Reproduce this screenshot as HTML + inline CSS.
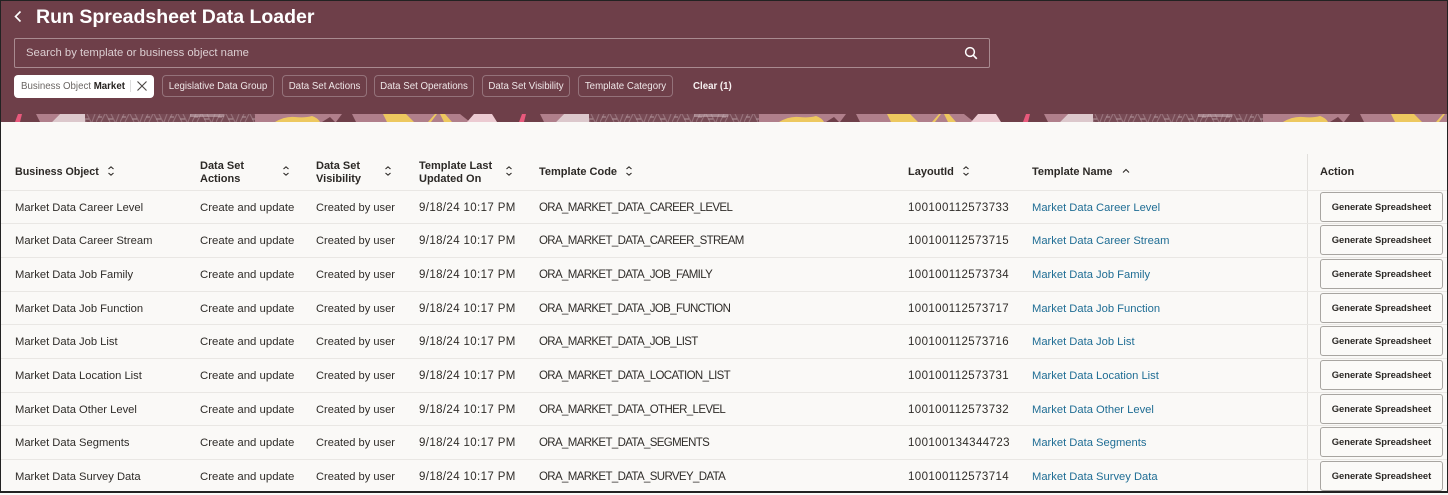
<!DOCTYPE html>
<html>
<head>
<meta charset="utf-8">
<title>Run Spreadsheet Data Loader</title>
<style>
html,body{margin:0;padding:0;background:#faf9f7;}
body{position:relative;width:1448px;height:493px;overflow:hidden;font-family:"Liberation Sans",sans-serif;color:#2c2926;}
.frame{position:absolute;left:0;top:0;width:1446px;height:490px;border:1px solid #222;border-bottom-width:2px;z-index:10;pointer-events:none;}
.hero{position:absolute;left:0;top:0;width:1448px;height:122px;background:#6e3f49;}
.band{position:absolute;left:0;top:114px;}
h1{position:absolute;left:36px;top:5px;margin:0;font-size:19.5px;line-height:24px;font-weight:bold;color:#fff;white-space:nowrap;}
.search{position:absolute;left:14px;top:38px;width:974px;height:28px;border:1px solid #a98a90;border-radius:2px;}
.search span{position:absolute;left:11px;top:6px;font-size:11.3px;line-height:16px;color:#dccfd2;white-space:nowrap;}
.chip{position:absolute;top:75px;height:22px;box-sizing:border-box;border:1px solid #94727a;border-radius:4px;font-size:9.7px;line-height:21px;color:#efe7e8;text-align:center;white-space:nowrap;}
.on{left:14px;width:140px;height:23px;top:75px;background:#fff;border:0;border-radius:4px;color:#6b6663;}
.on span{position:absolute;left:7px;top:4px;line-height:16px;}
.on b{color:#26221f;}
.clear{position:absolute;left:693px;top:79px;font-size:9.7px;line-height:15px;font-weight:bold;color:#f7f1f1;white-space:nowrap;}
.th{position:absolute;font-size:11px;line-height:13px;font-weight:bold;color:#2c2926;white-space:nowrap;}
.sort{position:absolute;}
.line{position:absolute;left:0;width:1447px;height:1px;background:#e9e7e4;}
.vline{position:absolute;left:1307px;top:154px;width:1px;height:337px;background:#e2e0dd;}
.row{position:absolute;left:0;width:1448px;height:33px;font-size:11.2px;line-height:35px;color:#2f2c29;}
.row span{position:absolute;top:0;white-space:nowrap;}
.a{left:15px}.b{left:200px;font-size:11.4px}.c{left:316px;font-size:11.1px}.d{left:419px;font-size:11.5px;letter-spacing:.37px}.e{left:539px;font-size:11.5px;letter-spacing:-.64px}.f{left:908px;font-size:11.5px;letter-spacing:.4px}
.row .g{left:1032px;color:#1f6d94;}
.row .h{left:1320px;top:1px;width:123px;height:30px;box-sizing:border-box;border:1px solid #a8a5a1;border-radius:3px;background:#fbfaf8;font-size:9.4px;line-height:28px;font-weight:bold;text-align:center;color:#2c2926;}
</style>
</head>
<body>
<div class="hero">
<svg class="band" width="1448" height="8" viewBox="0 0 1448 8" xmlns="http://www.w3.org/2000/svg">
<defs>
<pattern id="noise" width="24" height="8" patternUnits="userSpaceOnUse">
<rect width="24" height="8" fill="#774b55"/>
<path d="M0 8L4 0M5 8L9 0M10 0L14 8M15 0L19 8M20 8L23 0" stroke="#97717a" stroke-width="1.1"/>
<path d="M2 3h4M12 5h5" stroke="#b1959b" stroke-width="1"/>
</pattern>
<g id="tile">
<rect x="0" y="0" width="504" height="8" fill="#6e3f49"/>
<path d="M15 8L18 0H22L20 8Z" fill="#e8597c"/>
<path d="M36 0H60L52 8H40Z" fill="#b07f8b"/>
<path d="M52 8L60 0H85V8Z" fill="#dcc8cc"/>
<rect x="85" y="0" width="170" height="8" fill="url(#noise)"/>
<rect x="190" y="0" width="34" height="3" fill="#cdb6bb" opacity=".55"/>
<rect x="255" y="0" width="87" height="8" fill="#b07f8b"/>
<path d="M275 8Q285 2 295 3T312 2Q318 4 320 8Z" fill="#edc85f"/>
<path d="M322 8L330 3L335 8Z" fill="#6e3f49"/>
<path d="M342 0H352V8H336Z" fill="#6e3f49"/>
<path d="M352 0H460L470 8H356Z" fill="#b07f8b"/>
<path d="M383 0H406L414 8H387Z" fill="#edc85f"/>
<path d="M428 8L435 0H437L431 8ZM440 0H445L452 8H444Z" fill="#edc85f"/>
<path d="M467 8L474 0H492L497 8Z" fill="#eccbd2"/>
</g>
</defs>
<use href="#tile" x="0"/>
<use href="#tile" x="504"/>
<use href="#tile" x="1008"/>
</svg>
<svg style="position:absolute;left:13px;top:10px" width="10" height="13" viewBox="0 0 10 13"><path d="M7.5 1.5L2.5 6.5L7.5 11.5" fill="none" stroke="#fff" stroke-width="1.6"/></svg>
<h1>Run Spreadsheet Data Loader</h1>
<div class="search"><span>Search by template or business object name</span>
<svg style="position:absolute;left:949px;top:7px" width="14" height="14" viewBox="0 0 14 14"><circle cx="6" cy="6" r="4.4" fill="none" stroke="#fff" stroke-width="1.5"/><path d="M9.2 9.2L12.8 12.8" stroke="#fff" stroke-width="1.7"/></svg>
</div>
<div class="chip on"><span>Business Object <b>Market</b></span>
<i style="position:absolute;left:116px;top:5px;width:1px;height:12px;background:#ddd"></i>
<svg style="position:absolute;left:122px;top:5px" width="12" height="12" viewBox="0 0 12 12"><path d="M1.5 1.5L10.5 10.5M10.5 1.5L1.5 10.5" stroke="#4a4643" stroke-width="1.1"/></svg>
</div>
<div class="chip" style="left:162px;width:112px">Legislative Data Group</div>
<div class="chip" style="left:282px;width:85px">Data Set Actions</div>
<div class="chip" style="left:374px;width:100px">Data Set Operations</div>
<div class="chip" style="left:482px;width:88px">Data Set Visibility</div>
<div class="chip" style="left:578px;width:95px">Template Category</div>
<div class="clear">Clear (1)</div>
</div>

<svg width="0" height="0" style="position:absolute"><defs><g id="s"><path d="M1.5 4L4 1.8L6.5 4M1.5 8L4 10.2L6.5 8" fill="none" stroke="#2c2926" stroke-width="1.1"/></g></defs></svg>

<div class="th" style="left:15px;top:166px;font-size:10.7px">Business Object</div>
<svg class="sort" style="left:107px;top:165px" width="8" height="12"><use href="#s"/></svg>
<div class="th" style="left:200px;top:160px">Data Set<br>Actions</div>
<svg class="sort" style="left:282px;top:165px" width="8" height="12"><use href="#s"/></svg>
<div class="th" style="left:316px;top:160px">Data Set<br>Visibility</div>
<svg class="sort" style="left:384px;top:165px" width="8" height="12"><use href="#s"/></svg>
<div class="th" style="left:419px;top:160px">Template Last<br>Updated On</div>
<svg class="sort" style="left:505px;top:165px" width="8" height="12"><use href="#s"/></svg>
<div class="th" style="left:539px;top:166px">Template Code</div>
<svg class="sort" style="left:625px;top:165px" width="8" height="12"><use href="#s"/></svg>
<div class="th" style="left:908px;top:166px">LayoutId</div>
<svg class="sort" style="left:962px;top:165px" width="8" height="12"><use href="#s"/></svg>
<div class="th" style="left:1032px;top:166px">Template Name</div>
<svg class="sort" style="left:1122px;top:168px" width="8" height="6"><path d="M1 4.5L4 1.5L7 4.5" fill="none" stroke="#2c2926" stroke-width="1.1"/></svg>
<div class="th" style="left:1320px;top:166px">Action</div>

<div class="vline"></div>
<div class="line" style="top:190px"></div>
<div class="line" style="top:223px"></div>
<div class="line" style="top:257px"></div>
<div class="line" style="top:291px"></div>
<div class="line" style="top:324px"></div>
<div class="line" style="top:358px"></div>
<div class="line" style="top:392px"></div>
<div class="line" style="top:425px"></div>
<div class="line" style="top:459px"></div>

<div class="row" style="top:191px"><span class="a">Market Data Career Level</span><span class="b">Create and update</span><span class="c">Created by user</span><span class="d">9/18/24 10:17 PM</span><span class="e">ORA_MARKET_DATA_CAREER_LEVEL</span><span class="f">100100112573733</span><span class="g">Market Data Career Level</span><span class="h">Generate Spreadsheet</span></div>
<div class="row" style="top:224px"><span class="a">Market Data Career Stream</span><span class="b">Create and update</span><span class="c">Created by user</span><span class="d">9/18/24 10:17 PM</span><span class="e">ORA_MARKET_DATA_CAREER_STREAM</span><span class="f">100100112573715</span><span class="g">Market Data Career Stream</span><span class="h">Generate Spreadsheet</span></div>
<div class="row" style="top:258px"><span class="a">Market Data Job Family</span><span class="b">Create and update</span><span class="c">Created by user</span><span class="d">9/18/24 10:17 PM</span><span class="e">ORA_MARKET_DATA_JOB_FAMILY</span><span class="f">100100112573734</span><span class="g">Market Data Job Family</span><span class="h">Generate Spreadsheet</span></div>
<div class="row" style="top:292px"><span class="a">Market Data Job Function</span><span class="b">Create and update</span><span class="c">Created by user</span><span class="d">9/18/24 10:17 PM</span><span class="e">ORA_MARKET_DATA_JOB_FUNCTION</span><span class="f">100100112573717</span><span class="g">Market Data Job Function</span><span class="h">Generate Spreadsheet</span></div>
<div class="row" style="top:325px"><span class="a">Market Data Job List</span><span class="b">Create and update</span><span class="c">Created by user</span><span class="d">9/18/24 10:17 PM</span><span class="e">ORA_MARKET_DATA_JOB_LIST</span><span class="f">100100112573716</span><span class="g">Market Data Job List</span><span class="h">Generate Spreadsheet</span></div>
<div class="row" style="top:359px"><span class="a">Market Data Location List</span><span class="b">Create and update</span><span class="c">Created by user</span><span class="d">9/18/24 10:17 PM</span><span class="e">ORA_MARKET_DATA_LOCATION_LIST</span><span class="f">100100112573731</span><span class="g">Market Data Location List</span><span class="h">Generate Spreadsheet</span></div>
<div class="row" style="top:393px"><span class="a">Market Data Other Level</span><span class="b">Create and update</span><span class="c">Created by user</span><span class="d">9/18/24 10:17 PM</span><span class="e">ORA_MARKET_DATA_OTHER_LEVEL</span><span class="f">100100112573732</span><span class="g">Market Data Other Level</span><span class="h">Generate Spreadsheet</span></div>
<div class="row" style="top:426px"><span class="a">Market Data Segments</span><span class="b">Create and update</span><span class="c">Created by user</span><span class="d">9/18/24 10:17 PM</span><span class="e">ORA_MARKET_DATA_SEGMENTS</span><span class="f">100100134344723</span><span class="g">Market Data Segments</span><span class="h">Generate Spreadsheet</span></div>
<div class="row" style="top:460px"><span class="a">Market Data Survey Data</span><span class="b">Create and update</span><span class="c">Created by user</span><span class="d">9/18/24 10:17 PM</span><span class="e">ORA_MARKET_DATA_SURVEY_DATA</span><span class="f">100100112573714</span><span class="g">Market Data Survey Data</span><span class="h">Generate Spreadsheet</span></div>
<div class="frame"></div>
</body>
</html>
